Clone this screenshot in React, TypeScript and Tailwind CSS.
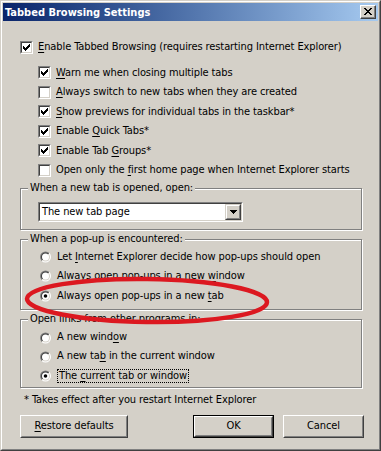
import React from "react";

function U({ children }: { children: React.ReactNode }) {
  return <span className="underline underline-offset-[2px] decoration-1">{children}</span>;
}

function Check({ on }: { on: boolean }) {
  return (
    <span className="block w-[13px] h-[13px] shrink-0 border border-t-[#808080] border-l-[#808080] border-b-white border-r-white">
      <span className="block w-full h-full border border-t-[#404040] border-l-[#404040] border-b-[#d4d0c8] border-r-[#d4d0c8] bg-white">
        {on && (
          <svg width="9" height="9" viewBox="0 0 9 9" shapeRendering="crispEdges" className="block">
            <rect x="1" y="3" width="1" height="3" fill="#000" />
            <rect x="2" y="4" width="1" height="3" fill="#000" />
            <rect x="3" y="5" width="1" height="3" fill="#000" />
            <rect x="4" y="4" width="1" height="3" fill="#000" />
            <rect x="5" y="3" width="1" height="3" fill="#000" />
            <rect x="6" y="2" width="1" height="3" fill="#000" />
            <rect x="7" y="1" width="1" height="3" fill="#000" />
          </svg>
        )}
      </span>
    </span>
  );
}

function Radio({ on }: { on: boolean }) {
  return (
    <svg width="13" height="12" viewBox="0 0 13 12" className="block shrink-0">
      <defs>
        <linearGradient id="rOut" x1="0" y1="0" x2="1" y2="1">
          <stop offset="0.5" stopColor="#808080" />
          <stop offset="0.5" stopColor="#ffffff" />
        </linearGradient>
        <linearGradient id="rIn" x1="0" y1="0" x2="1" y2="1">
          <stop offset="0.5" stopColor="#404040" />
          <stop offset="0.5" stopColor="#d4d0c8" />
        </linearGradient>
      </defs>
      <circle cx="6.5" cy="6" r="5.5" fill="url(#rOut)" />
      <circle cx="6.5" cy="6" r="4.5" fill="url(#rIn)" />
      <circle cx="6.5" cy="6" r="3.5" fill="#fff" />
      {on && <circle cx="6.5" cy="6" r="1.8" fill="#000" />}
    </svg>
  );
}

function CheckRow({ on, children, main }: { on: boolean; children: React.ReactNode; main?: boolean }) {
  return (
    <div className={`flex items-center gap-[5px] ${main ? "h-[20px]" : "h-[19.5px] ml-[18px]"}`}>
      <Check on={on} />
      <span className="whitespace-nowrap">{children}</span>
    </div>
  );
}

function RadioRow({ on, children, tall }: { on: boolean; children: React.ReactNode; tall?: boolean }) {
  return (
    <div className={`flex items-center gap-[5px] ml-[18px] ${tall ? "h-[19.5px]" : "h-[19px]"}`}>
      <Radio on={on} />
      {children}
    </div>
  );
}

function Group({ label, className, children }: { label: string; className: string; children: React.ReactNode }) {
  return (
    <div className={`relative border border-[#808080] shadow-[inset_1px_1px_0_#fff,1px_1px_0_#fff] ${className}`}>
      <span className="absolute left-[7px] top-[-8px] px-[2px] bg-[#d4d0c8] leading-[14px] whitespace-nowrap">
        {label}
      </span>
      {children}
    </div>
  );
}

function Button({ children, def, className }: { children: React.ReactNode; def?: boolean; className: string }) {
  return (
    <div className={`h-[23px] ${def ? "border border-black" : ""} ${className}`}>
      <div className="h-full border border-t-white border-l-white border-b-[#404040] border-r-[#404040]">
        <div className="h-full flex items-center justify-center border border-t-[#d4d0c8] border-l-[#d4d0c8] border-b-[#808080] border-r-[#808080]">
          {children}
        </div>
      </div>
    </div>
  );
}

export default function App() {
  return (
    <div className="relative w-[381px] h-[451px] overflow-hidden bg-[#d4d0c8] border border-t-[#d4d0c8] border-l-[#d4d0c8] border-b-[#404040] border-r-[#404040] font-['DejaVu_Sans_Condensed',Tahoma,sans-serif] text-[11px] tracking-[-0.1px] text-black">
      <div className="h-full border border-t-white border-l-white border-b-[#808080] border-r-[#808080] p-px">
        {/* title bar */}
        <div className="h-[18px] flex items-center pl-[2px] pr-[2px] bg-gradient-to-r from-[#0a246a] to-[#a6caf0]">
          <span className="text-white font-bold text-[11px] leading-none tracking-normal">Tabbed Browsing Settings</span>
          <div className="ml-auto w-[16px] h-[14px] bg-[#d4d0c8] border border-t-white border-l-white border-b-[#404040] border-r-[#404040]">
            <div className="w-full h-full flex items-center justify-center border-b border-r border-b-[#808080] border-r-[#808080]">
              <svg width="8" height="7" viewBox="0 0 8 7" shapeRendering="crispEdges">
                <path d="M0 0h2v1h-2zM6 0h2v1h-2zM1 1h2v1h-2zM5 1h2v1h-2zM2 2h4v1h-4zM3 3h2v1h-2zM2 4h4v1h-4zM1 5h2v1h-2zM5 5h2v1h-2zM0 6h2v1h-2zM6 6h2v1h-2z" fill="#000" />
              </svg>
            </div>
          </div>
        </div>

        {/* body */}
        <div className="pl-[17px] pr-[16px]">
          <div className="mt-[16px]">
            <CheckRow on main>
              <U>E</U>nable Tabbed Browsing (requires restarting Internet Explorer)
            </CheckRow>
          </div>
          <div className="mt-[6px]">
            <CheckRow on>
              <U>W</U>arn me when closing multiple tabs
            </CheckRow>
            <CheckRow on={false}>
              <U>A</U>lways switch to new tabs when they are created
            </CheckRow>
            <CheckRow on>
              <U>S</U>how previews for individual tabs in the taskbar*
            </CheckRow>
            <CheckRow on>
              Enable <U>Q</U>uick Tabs*
            </CheckRow>
            <CheckRow on>
              Enable Tab <U>G</U>roups*
            </CheckRow>
            <CheckRow on={false}>
              Open only the <U>f</U>irst home page when Internet Explorer starts
            </CheckRow>
          </div>

          <Group label="When a new tab is opened, open:" className="mt-[8px] h-[42px] pt-[13px]">
            <div className="ml-[17px] w-[205px] h-[20px] flex border border-t-[#808080] border-l-[#808080] border-b-white border-r-white">
              <div className="flex-1 flex border border-t-[#404040] border-l-[#404040] border-b-[#d4d0c8] border-r-[#d4d0c8] bg-white">
                <span className="flex-1 flex items-center pl-[2px]">The new tab page</span>
                <div className="w-[16px] h-full bg-[#d4d0c8] border border-t-[#d4d0c8] border-l-[#d4d0c8] border-b-[#404040] border-r-[#404040]">
                  <div className="w-full h-full flex items-center justify-center border border-t-white border-l-white border-b-[#808080] border-r-[#808080]">
                    <svg width="7" height="4" viewBox="0 0 7 4" shapeRendering="crispEdges">
                      <path d="M0 0h7v1h-7zM1 1h5v1h-5zM2 2h3v1h-3zM3 3h1v1h-1z" fill="#000" />
                    </svg>
                  </div>
                </div>
              </div>
            </div>
          </Group>

          <Group label="When a pop-up is encountered:" className="mt-[9px] h-[71px] pt-[7px]">
            <RadioRow on={false} tall>
              <span className="whitespace-nowrap">Let <U>I</U>nternet Explorer decide how pop-ups should open</span>
            </RadioRow>
            <RadioRow on={false} tall>
              <span className="whitespace-nowrap">Always open pop-ups in a new <U>w</U>indow</span>
            </RadioRow>
            <RadioRow on tall>
              <span className="whitespace-nowrap">Always open pop-ups in a new <U>t</U>ab</span>
            </RadioRow>
          </Group>

          <Group label="Open links from other programs in:" className="mt-[9px] h-[69px] pt-[8px]">
            <RadioRow on={false}>
              <span className="whitespace-nowrap">A new wind<U>o</U>w</span>
            </RadioRow>
            <RadioRow on={false}>
              <span className="whitespace-nowrap">A new ta<U>b</U> in the current window</span>
            </RadioRow>
            <RadioRow on>
              <span className="whitespace-nowrap border border-dotted border-black px-px leading-[12px]">
                The <U>c</U>urrent tab or window
              </span>
            </RadioRow>
          </Group>

          <div className="mt-[5px] h-[14px] leading-[14px] pl-[4px]">* Takes effect after you restart Internet Explorer</div>

          <div className="mt-[8px] flex mr-[-2px]">
            <Button className="w-[108px]">
              <span><U>R</U>estore defaults</span>
            </Button>
            <Button def className="w-[81px] ml-auto">OK</Button>
            <Button className="w-[81px] ml-[9px]">Cancel</Button>
          </div>
        </div>
      </div>

      {/* red hand-drawn ellipse over the pop-up option */}
      <svg className="absolute left-[22px] top-[275px] pointer-events-none" width="250" height="50" viewBox="0 0 250 50">
        <ellipse cx="124" cy="24.5" rx="120" ry="21.5" fill="none" stroke="#dc1820" strokeWidth="4.5" transform="rotate(0.8 124 24.5)" />
      </svg>
    </div>
  );
}
